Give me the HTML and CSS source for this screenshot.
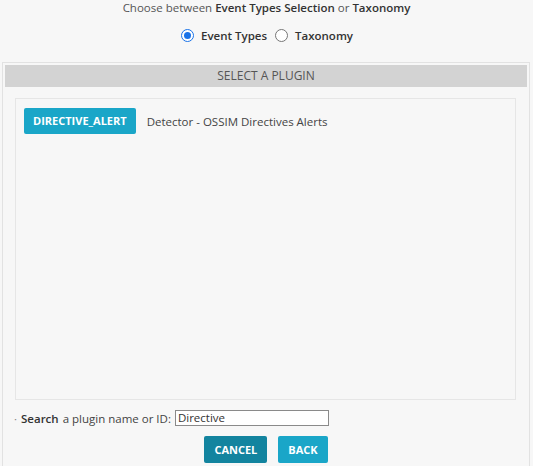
FILE: index.html
```html
<!DOCTYPE html>
<html>
<head>
<meta charset="utf-8">
<link rel="stylesheet" href="styles.css">
</head>
<body>
<div class="intro">Choose between <b>Event Types Selection</b> or <b>Taxonomy</b></div>
<div class="radios">
  <label class="radio"><span class="dot on"></span>Event Types</label>
  <label class="radio"><span class="dot"></span>Taxonomy</label>
</div>
<div class="panel">
  <div class="panel-head">SELECT A PLUGIN</div>
  <div class="list">
    <div class="item">
      <span class="tag">DIRECTIVE_ALERT</span>
      <span class="desc">Detector - OSSIM Directives Alerts</span>
    </div>
  </div>
  <div class="search">
    <span class="bullet">·</span> <b>Search</b> a plugin name or ID: <span class="input">Directive</span>
  </div>
  <div class="actions">
    <span class="btn dark">CANCEL</span>
    <span class="btn">BACK</span>
  </div>
</div>
</body>
</html>
```
FILE: styles.css
```css
html, body {
  margin: 0;
  padding: 0;
  background: #f7f7f7;
}
body {
  font-family: "Open Sans", "Noto Sans", sans-serif;
  font-size: 11.5px;
  color: #555;
}
b { color: #333; font-weight: 600; }
.intro {
  text-align: center;
  line-height: 14px;
  padding-top: 1px;
  height: 16px;
}
.radios {
  display: flex;
  justify-content: center;
  align-items: center;
  gap: 8px;
  height: 36px;
  padding-left: 1px;
  box-sizing: border-box;
}
.radio {
  display: flex;
  align-items: center;
  gap: 7px;
  font-weight: 600;
  color: #333;
}
.dot {
  width: 11px;
  height: 11px;
  border: 1px solid #767676;
  border-radius: 50%;
  background: #fff;
  box-sizing: content-box;
  position: relative;
}
.dot.on {
  border-color: #1a73e8;
}
.dot.on::after {
  content: "";
  position: absolute;
  left: 2px;
  top: 2px;
  width: 7px;
  height: 7px;
  border-radius: 50%;
  background: #1a73e8;
}
.panel {
  margin: 9px 3px 0 2px;
  border: 1px solid #e2e2e2;
  padding: 2px 2px 0 2px;
  height: 420px;
}
.panel-head {
  background: #d3d3d3;
  text-align: center;
  height: 22px;
  line-height: 21px;
  color: #555;
  font-size: 12px;
}
.list {
  margin: 11px 11px 0 10px;
  border: 1px solid #e6e6e6;
  height: 302px;
  padding: 9px 8px;
  box-sizing: border-box;
}
.item {
  display: flex;
  align-items: center;
  gap: 11px;
}
.tag {
  background: #1aa6c8;
  color: #fff;
  font-weight: 700;
  border-radius: 2px;
  height: 26px;
  line-height: 26px;
  padding: 0 9px;
  font-size: 11px;
}
.desc { color: #444; }
.search {
  margin: 10px 0 0 9px;
  display: flex;
  align-items: center;
  gap: 4px;
  color: #444;
}
.bullet { color: #888; }
.input {
  display: inline-block;
  width: 148px;
  height: 14px;
  border: 1px solid #8a8a8a;
  background: #fff;
  padding: 0 2px;
  line-height: 14px;
  color: #333;
}
.actions {
  display: flex;
  justify-content: center;
  gap: 11px;
  margin-top: 10px;
}
.btn {
  background: #1aa6c8;
  color: #fff;
  font-weight: 700;
  height: 27px;
  line-height: 27px;
  padding: 0 10px;
  border-radius: 2px;
  font-size: 11px;
}
.btn.dark { background: #13849f; }
```
